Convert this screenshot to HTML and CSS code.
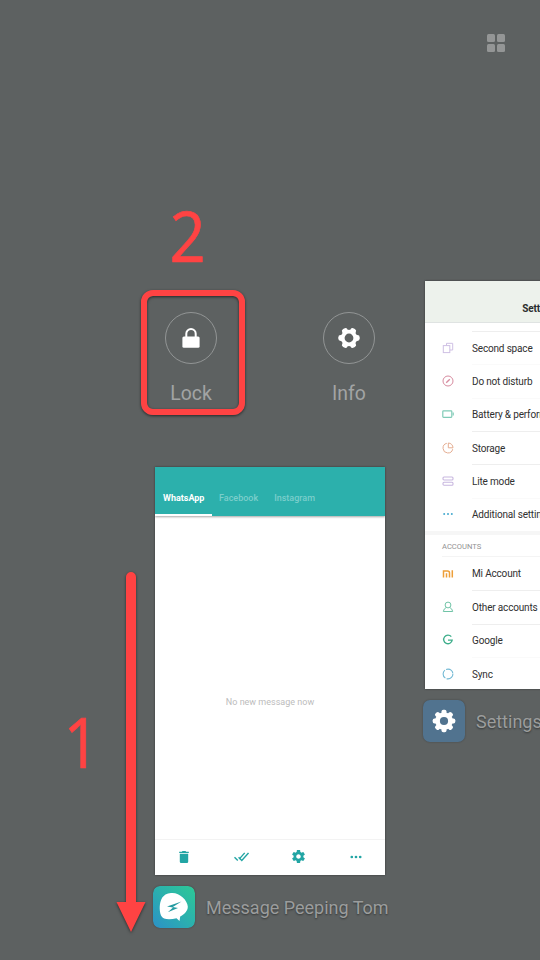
FILE: index.html
```html
<!DOCTYPE html>
<html lang="en">
<head>
<meta charset="utf-8">
<title>Recent apps</title>
<link rel="stylesheet" href="styles.css">
</head>
<body>
<svg class="defs" width="0" height="0">
  <symbol id="gear" viewBox="2 2 20 20"><path fill="currentColor" d="M19.43 12.98c.04-.32.07-.64.07-.98s-.03-.66-.07-.98l2.11-1.65c.19-.15.24-.42.12-.64l-2-3.46c-.12-.22-.39-.3-.61-.22l-2.49 1c-.52-.4-1.08-.73-1.69-.98l-.38-2.65C14.46 2.18 14.25 2 14 2h-4c-.25 0-.46.18-.49.42l-.38 2.65c-.61.25-1.17.59-1.69.98l-2.49-1c-.23-.09-.49 0-.61.22l-2 3.46c-.13.22-.07.49.12.64l2.11 1.65c-.04.32-.07.65-.07.98s.03.66.07.98l-2.11 1.65c-.19.15-.24.42-.12.64l2 3.46c.12.22.39.3.61.22l2.49-1c.52.4 1.08.73 1.69.98l.38 2.65c.03.24.24.42.49.42h4c.25 0 .46-.18.49-.42l.38-2.65c.61-.25 1.17-.59 1.69-.98l2.49 1c.23.09.49 0 .61-.22l2-3.46c.12-.22.07-.49-.12-.64l-2.11-1.65zM12 15.5c-1.93 0-3.5-1.57-3.5-3.5s1.57-3.5 3.5-3.5 3.5 1.57 3.5 3.5-1.57 3.5-3.5 3.5z"/></symbol>
</svg>
<main class="screen">
  <header class="top"><div class="view-toggle"><i></i><i></i><i></i><i></i></div></header>

  <div class="carousel">
    <section class="app app-message">
      <div class="actions">
        <div class="action">
          <span class="ring"><svg width="18" height="22" viewBox="0 0 18 22"><path d="M4.300 10V6.700a4.700 4.700 0 0 1 9.400 0V10" fill="none" stroke="#fff" stroke-width="2"/><rect x=".4" y="9.500" width="17.200" height="11.200" rx="1.500" fill="#fff"/></svg></span>
          <span class="action-name">Lock</span>
        </div>
        <div class="action">
          <span class="ring"><svg width="22" height="22" viewBox="-11 -11 22 22"><g fill="#fff"><circle r="8.300"/><rect x="-10.700" y="-3" width="21.400" height="6" rx="2.400"/><rect x="-10.700" y="-3" width="21.400" height="6" rx="2.400" transform="rotate(60)"/><rect x="-10.700" y="-3" width="21.400" height="6" rx="2.400" transform="rotate(120)"/></g><circle r="4.400" fill="#5d6161"/></svg></span>
          <span class="action-name">Info</span>
        </div>
      </div>
      <div class="card message-card">
        <nav class="tabs"><span class="tab active">WhatsApp</span><span class="tab">Facebook</span><span class="tab">Instagram</span></nav>
        <div class="empty">No new message now</div>
        <div class="toolbar">
          <svg width="10" height="12" viewBox="0 0 10 12"><path fill="currentColor" d="M.2.700h2.600L3.500 0h3l.7.700h2.600v1.300H.2zM.8 2.700h8.400v8q0 1.300-1.300 1.300H2.100Q.8 12 .8 10.700z"/></svg>
          <svg width="15" height="10" viewBox="0 0 15 10"><path fill="none" stroke="currentColor" stroke-width="1.400" d="M.5 5.300l3.300 3.300M4.600 5.200l3.200 3.300 6.700-7.600M5.200 7.100L10.700.9"/></svg>
          <svg width="13" height="13"><use href="#gear"/></svg>
          <svg width="12" height="4" viewBox="0 0 12 4" fill="currentColor"><circle cx="1.800" cy="2" r="1.350"/><circle cx="6" cy="2" r="1.350"/><circle cx="10.200" cy="2" r="1.350"/></svg>
        </div>
      </div>
      <div class="app-label">
        <svg class="app-icon" width="42" height="42" viewBox="0 0 42 42"><defs><linearGradient id="mint" x1="0" y1="1" x2="1" y2="0"><stop offset="0" stop-color="#2c91c7"/><stop offset=".5" stop-color="#2bb0ae"/><stop offset="1" stop-color="#2dc996"/></linearGradient></defs><rect width="42" height="42" rx="7" fill="url(#mint)"/><path fill="#fff" d="M18 7C26 6 34.500 14 34.800 20.500C35 25 31 28.500 27.200 30.500L26.500 35L23.500 32.200C17 34 10 34 8 29.500C6 24 6.500 17 8.500 13C10.500 9 14 7.300 18 7Z"/><path fill="#269ca2" d="M28.500 15.500L14 20.600L20 21.600L14.800 26.200L25 22L19.800 20.900Z"/></svg>
        <span class="app-name">Message Peeping Tom</span>
      </div>
    </section>

    <section class="app app-settings">
      <div class="card settings-card">
        <div class="settings-title">Settings</div>
        <ul class="list first">
          <li><svg width="12" height="12" viewBox="0 0 12 12" fill="none" stroke="#cfc0e4"><rect x="1.300" y="3.600" width="6.500" height="7"/><path d="M4.500 3.500V1.300H10.700V8H8"/></svg><span>Second space</span></li>
          <li class="soft"><svg width="12" height="12" viewBox="0 0 12 12" fill="none" stroke="#d78b9f"><circle cx="6" cy="6" r="5"/><path d="M4.200 7.800l3.600-3.600" stroke-width="1.300"/></svg><span>Do not disturb</span></li>
          <li class="soft"><svg width="12" height="12" viewBox="0 0 12 12" fill="none" stroke="#80cbb7" stroke-width="1.200"><rect x=".8" y="2.800" width="9" height="6.500" rx=".7"/><path d="M11.200 4.500v3"/></svg><span>Battery &amp; performance</span></li>
          <li><svg width="12" height="12" viewBox="0 0 12 12" fill="none" stroke="#e5ad91"><path d="M4.800 1.300A4.900 4.900 0 1 0 10.700 7.200"/><path d="M6.300 1V5.800H11A4.800 4.800 0 0 0 6.300 1Z"/></svg><span>Storage</span></li>
          <li><svg width="12" height="12" viewBox="0 0 12 12" fill="none" stroke="#c8b7df" stroke-width="1.100"><rect x="1" y="2" width="10" height="3" rx="1"/><rect x="1" y="7.200" width="10" height="3" rx="1"/></svg><span>Lite mode</span></li>
          <li class="soft"><svg width="12" height="12" viewBox="0 0 12 12" fill="#45a9cf"><circle cx="2.200" cy="6" r="1"/><circle cx="6" cy="6" r="1"/><circle cx="9.800" cy="6" r="1"/></svg><span>Additional settings</span></li>
        </ul>
        <div class="group-name">ACCOUNTS</div>
        <ul class="list second">
          <li><svg width="12" height="12" viewBox="0 0 12 12" fill="none" stroke="#ed9f39" stroke-width="1.500"><path d="M1.500 9.500V3H5.500Q7.500 3 7.500 5V9.500M4.500 5.200V9.500M10.300 2.300V9.500"/></svg><span>Mi Account</span></li>
          <li><svg width="12" height="12" viewBox="0 0 12 12" fill="none" stroke="#71c4a7"><circle cx="6" cy="4" r="2.900"/><path d="M4.200 6.500Q1.800 7.600 1.300 10.500H10.700Q10.200 7.600 7.800 6.500"/></svg><span>Other accounts</span></li>
          <li><svg width="12" height="12" viewBox="0 0 12 12" fill="none" stroke="#3eae8b" stroke-width="1.300"><path d="M9.300 2.700A4.300 4.300 0 1 0 10.200 6.200H6"/></svg><span>Google</span></li>
          <li class="soft"><svg width="12" height="12" viewBox="0 0 12 12" fill="none" stroke="#73b9d4" stroke-width="1.100"><circle cx="6" cy="6" r="4.900" stroke-dasharray="9 1.260"/></svg><span>Sync</span></li>
        </ul>
      </div>
      <div class="app-label">
        <span class="app-icon gear-tile"><svg width="24" height="24" viewBox="-12 -12 24 24"><g fill="#fff"><circle r="8.800"/><rect x="-11.300" y="-2.500" width="22.600" height="5" rx="1.800"/><rect x="-11.300" y="-2.500" width="22.600" height="5" rx="1.800" transform="rotate(45)"/><rect x="-11.300" y="-2.500" width="22.600" height="5" rx="1.800" transform="rotate(90)"/><rect x="-11.300" y="-2.500" width="22.600" height="5" rx="1.800" transform="rotate(135)"/></g><circle r="4.100" fill="#51738f"/></svg></span>
        <span class="app-name">Settings</span>
      </div>
    </section>
  </div>

  <div class="callout-box"></div>
  <div class="callout-number two">2</div>
  <div class="callout-number one">1</div>
  <svg class="callout-arrow" width="32" height="364" viewBox="0 0 32 364"><path fill="#ff4343" d="M11 6a5 5 0 0 1 10 0V331H30.500L16 361L1.500 331H11Z"/></svg>
</main>
</body>
</html>
```

FILE: styles.css
```css
* { box-sizing: border-box; }
body { margin: 0; font-family: Roboto, sans-serif; }
svg { display: block; flex: none; }
.defs { position: absolute; }
.screen { position: relative; width: 540px; height: 960px; overflow: hidden; background: #5d6161; }

.top { display: flex; justify-content: flex-end; height: 281px; padding: 34px 35px 0 0; }
.view-toggle { display: grid; grid-template-columns: 8px 8px; grid-template-rows: 8px 8px; gap: 2px; }
.view-toggle i { background: #949696; border-radius: 1.5px; }

.carousel { display: flex; gap: 40px; padding-left: 155px; }
.app { flex: none; width: 230px; }
.app-message { padding-top: 31px; }

.actions { display: flex; justify-content: space-between; height: 155px; padding: 0 10px; }
.action { display: flex; flex-direction: column; align-items: center; width: 52px; }
.ring { display: flex; align-items: center; justify-content: center; width: 52px; height: 52px; border: 1px solid #929595; border-radius: 50%; }
.action-name { margin-top: 18px; font-size: 19.4px; line-height: 24px; color: #a2a4a4; }

.card { overflow: hidden; background: #fff; box-shadow: 0 0 2px rgba(0, 0, 0, .45); }
.message-card { display: flex; flex-direction: column; height: 408px; }
.tabs { display: flex; align-items: flex-end; height: 49px; background: #2cb0ac; box-shadow: 0 1px 2px rgba(0, 0, 0, .35); font-size: 9px; font-weight: 500; line-height: 12px; color: #7bcecb; }
.tab { height: 24px; padding: 0 8px; }
.tab.active { width: 57px; margin-right: -1px; color: #fff; font-weight: 700; border-bottom: 2px solid #fff; }
.empty { display: flex; flex: 1; align-items: center; justify-content: center; padding-top: 48px; font-size: 9px; color: #bcbcbc; }
.toolbar { display: grid; grid-template-columns: repeat(4, 1fr); align-items: center; justify-items: center; height: 36px; padding-bottom: 2px; border-top: 1px solid #f3f3f3; color: #22a5a4; }

.app-label { display: flex; align-items: center; gap: 11px; margin: 11px 0 0 -2px; white-space: nowrap; }
.app-icon { flex: none; border-radius: 7px; box-shadow: 0 0 2px rgba(0, 0, 0, .3); }
.app-name { font-size: 18px; color: #9b9d9d; text-shadow: 0 1px 2px rgba(0, 0, 0, .45); }
.gear-tile { display: flex; align-items: center; justify-content: center; width: 42px; height: 42px; background: #51738f; }

.settings-card { height: 408px; }
.settings-title { height: 42px; padding: 21px 0 0 1px; background: #edf2ec; border-bottom: 1px solid #dfe3e2; font-size: 10px; font-weight: 700; line-height: 14px; letter-spacing: -.1px; text-align: center; color: #2b2d2c; }
.list { margin: 0; padding: 0; list-style: none; font-size: 10px; letter-spacing: -.17px; color: #303030; }
.list li { display: flex; align-items: center; gap: 12px; height: 33.35px; padding-left: 17px; }
.list span { display: flex; flex: 1; align-items: center; margin-left: 6px; height: 100%; border-top: 1px solid #eee; white-space: nowrap; }
.list .soft span { border-top-color: #fafafa; }
.first { padding-top: 8px; border-bottom: 4px solid #f6f6f6; height: 212px; }
.group-name { height: 22px; margin-left: 17px; border-bottom: 1px solid #f4f4f4; font-size: 7.6px; line-height: 23px; color: #929292; }
.second li:first-child span { border-top: 0; }

.callout-box { position: absolute; left: 141px; top: 290px; width: 104px; height: 125px; border: 6px solid #ff4343; border-radius: 12px; box-shadow: 0 1px 3px rgba(0, 0, 0, .6), inset 0 1px 3px rgba(0, 0, 0, .6); }
.callout-number { position: absolute; font: 69px/70px "Open Sans", sans-serif; color: #ff4343; -webkit-text-stroke: .7px #ff4343; transform: scaleX(.92); }
.two { left: 168px; top: 200px; }
.one { left: 62px; top: 706px; }
.callout-arrow { position: absolute; left: 115px; top: 571px; filter: drop-shadow(0 1px 1.5px rgba(0, 0, 0, .55)); }
```
